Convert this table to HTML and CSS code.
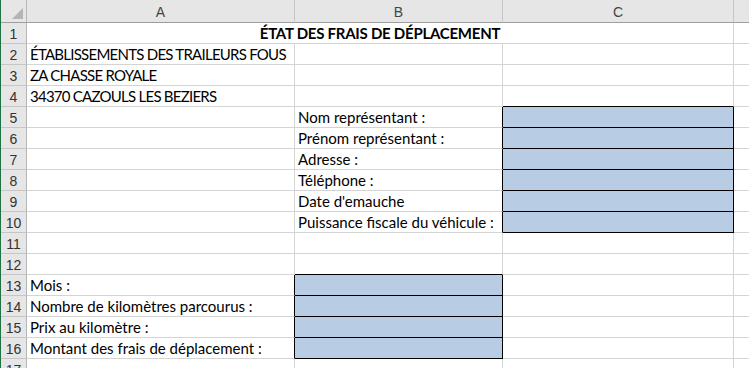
FILE: index.html
```html
<!DOCTYPE html>
<html lang="fr">
<head>
<meta charset="utf-8">
<title>État des frais de déplacement</title>
<link rel="stylesheet" href="styles.css">
</head>
<body>
<div class="sheet">
  <div class="corner"></div><div class="colh">A</div><div class="colh">B</div><div class="colh">C</div><div class="colh"></div>

  <div class="rowh">1</div><div class="cell merged title">ÉTAT DES FRAIS DE DÉPLACEMENT</div><div class="cell"></div>

  <div class="rowh">2</div><div class="cell caps">ÉTABLISSEMENTS DES TRAILEURS FOUS</div><div class="cell"></div><div class="cell"></div><div class="cell"></div>
  <div class="rowh">3</div><div class="cell caps">ZA CHASSE ROYALE</div><div class="cell"></div><div class="cell"></div><div class="cell"></div>
  <div class="rowh">4</div><div class="cell caps">34370 CAZOULS LES BEZIERS</div><div class="cell"></div><div class="cell bb"></div><div class="cell"></div>

  <div class="rowh">5</div><div class="cell"></div><div class="cell rb">Nom représentant :</div><div class="cell field"></div><div class="cell"></div>
  <div class="rowh">6</div><div class="cell"></div><div class="cell rb">Prénom représentant :</div><div class="cell field"></div><div class="cell"></div>
  <div class="rowh">7</div><div class="cell"></div><div class="cell rb">Adresse :</div><div class="cell field"></div><div class="cell"></div>
  <div class="rowh">8</div><div class="cell"></div><div class="cell rb">Téléphone :</div><div class="cell field"></div><div class="cell"></div>
  <div class="rowh">9</div><div class="cell"></div><div class="cell rb">Date d'emauche</div><div class="cell field"></div><div class="cell"></div>
  <div class="rowh">10</div><div class="cell"></div><div class="cell rb">Puissance fiscale du véhicule :</div><div class="cell field"></div><div class="cell"></div>

  <div class="rowh">11</div><div class="cell"></div><div class="cell"></div><div class="cell"></div><div class="cell"></div>
  <div class="rowh">12</div><div class="cell"></div><div class="cell bb"></div><div class="cell"></div><div class="cell"></div>

  <div class="rowh">13</div><div class="cell rb">Mois :</div><div class="cell field"></div><div class="cell"></div><div class="cell"></div>
  <div class="rowh">14</div><div class="cell rb">Nombre de kilomètres parcourus :</div><div class="cell field"></div><div class="cell"></div><div class="cell"></div>
  <div class="rowh">15</div><div class="cell rb">Prix au kilomètre :</div><div class="cell field"></div><div class="cell"></div><div class="cell"></div>
  <div class="rowh">16</div><div class="cell rb">Montant des frais de déplacement :</div><div class="cell field"></div><div class="cell"></div><div class="cell"></div>

  <div class="rowh">17</div><div class="cell"></div><div class="cell"></div><div class="cell"></div><div class="cell"></div>
</div>
</body>
</html>
```

FILE: styles.css
```css
* { box-sizing: border-box; }
html, body { margin: 0; padding: 0; background: #ffffff; }
body { width: 749px; height: 368px; overflow: hidden; }

.sheet {
  display: grid;
  grid-template-columns: 26px 268px 208px 231px 120px;
  grid-template-rows: 23px repeat(17, 21px);
  border-left: 1px solid #217346;
  width: 749px;
  overflow: hidden;
  font-family: Lato, "Liberation Sans", sans-serif;
  font-size: 15px;
  color: #000;
}

.corner, .colh {
  background: #e6e6e6;
  border-right: 1px solid #c6c6c6;
  border-bottom: 1px solid #9e9e9e;
}
.corner { position: relative; border-right-color: #b6b6b6; }
.corner::after {
  content: "";
  position: absolute;
  right: 3px;
  bottom: 3px;
  width: 11px;
  height: 11px;
  background: #b4b4b4;
  clip-path: polygon(100% 0, 100% 100%, 0 100%);
}
.colh {
  display: flex;
  align-items: center;
  justify-content: center;
  font-family: "Liberation Sans", Arial, sans-serif;
  font-size: 14px;
  color: #444;
  padding-top: 1px;
}

.rowh {
  background: #e6e6e6;
  border-right: 1px solid #b6b6b6;
  border-bottom: 1px solid #c6c6c6;
  display: flex;
  align-items: center;
  justify-content: center;
  font-family: "Liberation Sans", Arial, sans-serif;
  font-size: 14px;
  color: #333;
  padding-top: 1px;
}

.cell {
  border-right: 1px solid #d4d4d4;
  border-bottom: 1px solid #d4d4d4;
  display: flex;
  align-items: flex-end;
  padding: 0 0 1px 3px;
  white-space: nowrap;
  overflow: visible;
  line-height: 18px;
}
.caps { letter-spacing: -0.75px; }
.merged { grid-column: span 3; justify-content: center; padding-left: 0; }
.title { font-weight: 700; letter-spacing: -0.25px; }

.rb { border-right-color: #000; }
.bb { border-bottom-color: #000; }
.field {
  background: #b8cce4;
  border-right-color: #000;
  border-bottom-color: #000;
}
```
